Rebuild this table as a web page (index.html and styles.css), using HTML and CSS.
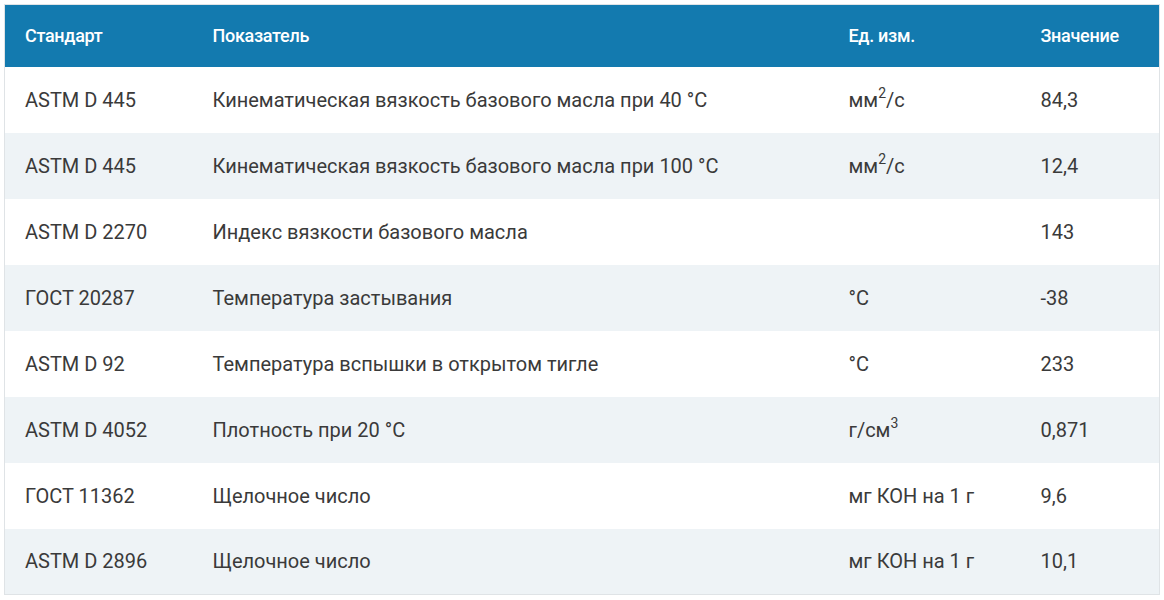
FILE: index.html
```html
<!DOCTYPE html>
<html lang="ru">
<head>
<meta charset="utf-8">
<link rel="stylesheet" href="styles.css">
</head>
<body>
<table class="spec">
  <colgroup>
    <col class="c1"><col class="c2"><col class="c3"><col class="c4">
  </colgroup>
  <thead>
    <tr><th>Стандарт</th><th>Показатель</th><th>Ед. изм.</th><th>Значение</th></tr>
  </thead>
  <tbody>
    <tr><td>ASTM D 445</td><td>Кинематическая вязкость базового масла при 40 °C</td><td>мм<sup>2</sup>/с</td><td>84,3</td></tr>
    <tr><td>ASTM D 445</td><td>Кинематическая вязкость базового масла при 100 °C</td><td>мм<sup>2</sup>/с</td><td>12,4</td></tr>
    <tr><td>ASTM D 2270</td><td>Индекс вязкости базового масла</td><td></td><td>143</td></tr>
    <tr><td>ГОСТ 20287</td><td>Температура застывания</td><td>°C</td><td>-38</td></tr>
    <tr><td>ASTM D 92</td><td>Температура вспышки в открытом тигле</td><td>°C</td><td>233</td></tr>
    <tr><td>ASTM D 4052</td><td>Плотность при 20 °C</td><td>г/см<sup>3</sup></td><td>0,871</td></tr>
    <tr><td>ГОСТ 11362</td><td>Щелочное число</td><td>мг КОН на 1 г</td><td>9,6</td></tr>
    <tr><td>ASTM D 2896</td><td>Щелочное число</td><td>мг КОН на 1 г</td><td>10,1</td></tr>
  </tbody>
</table>
</body>
</html>
```
FILE: styles.css
```css
html, body {
  margin: 0;
  background: #ffffff;
}
body {
  padding: 4px 0 0 4px;
  font-family: Roboto, "Liberation Sans", Arial, sans-serif;
}
.spec {
  border-collapse: collapse;
  table-layout: fixed;
  width: 1156px;
  border: 1px solid #dfe3e6;
  color: #3a3a3a;
}
.c1 { width: 188px; }
.c2 { width: 636px; }
.c3 { width: 192px; }
.c4 { width: auto; }
.spec thead th {
  background: #137aaf;
  color: #ffffff;
  font-weight: 500;
  font-size: 18px;
  text-align: left;
  height: 62px;
  padding: 0 20px;
  box-sizing: border-box;
  letter-spacing: -0.3px;
}
.spec tbody td {
  height: 66px;
  padding: 0 20px;
  font-size: 20px;
  font-weight: 400;
  box-sizing: border-box;
  vertical-align: middle;
  white-space: nowrap;
}
.spec tbody tr:nth-child(even) td {
  background: #eef3f6;
}
.spec sup {
  font-size: 14px;
  line-height: 0;
  vertical-align: 9px;
}
```
